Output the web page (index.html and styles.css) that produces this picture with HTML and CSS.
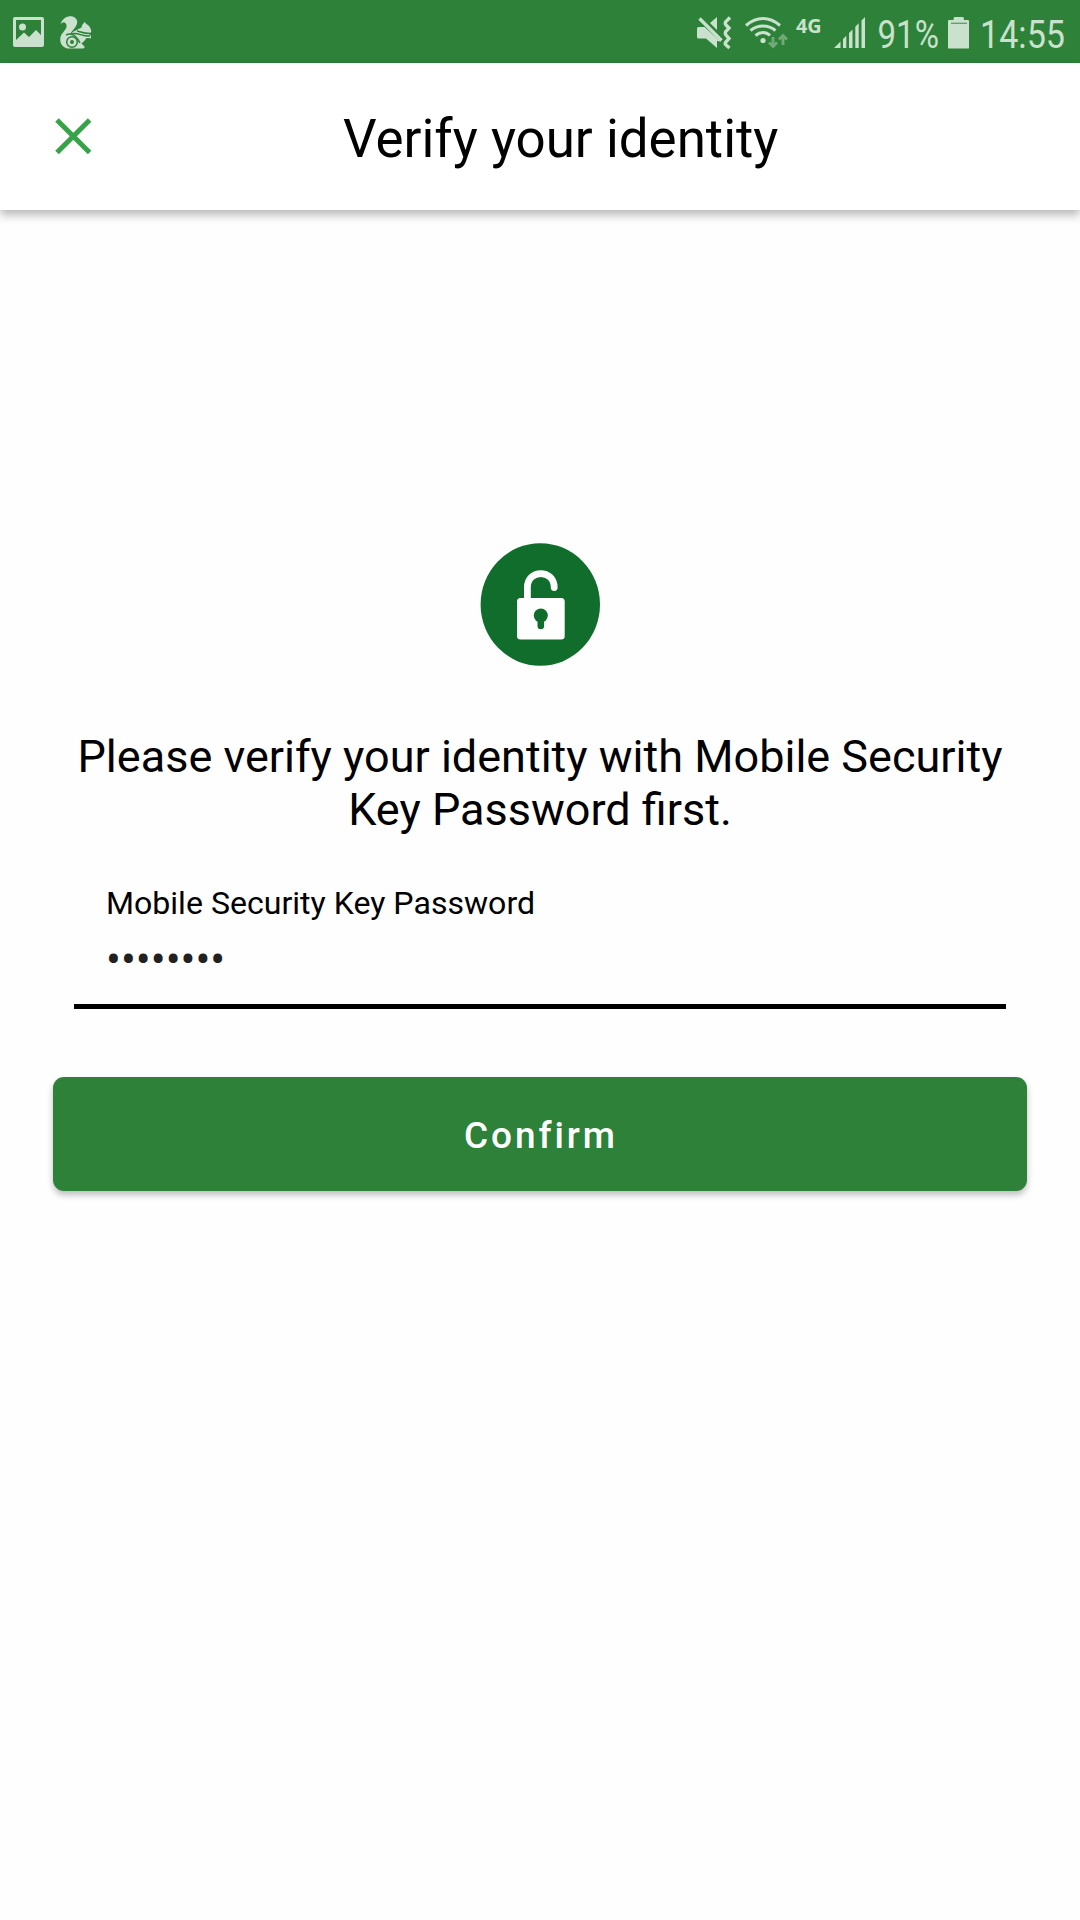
FILE: index.html
```html
<!DOCTYPE html>
<html lang="en">
<head>
<meta charset="utf-8">
<title>Verify your identity</title>
<link rel="stylesheet" href="styles.css">
</head>
<body>
<div class="screen">
  <div class="status">
    <svg class="status-left" width="100" height="63" viewBox="0 0 100 63">
      <path fill-rule="evenodd" d="M15 17H42Q44 17 44 19V45Q44 47 42 47H15Q13 47 13 45V19Q13 17 15 17ZM16 20V40L24 32.500L29 37L36 30L41 35V20Z"/>
      <circle cx="22.500" cy="27" r="3.500"/>
      <path d="M60.500 24.500C62 18.500 67 16 71.500 16.300C77 17.500 78.500 21.500 76 26C74 29.500 71 31.500 70.500 34C74 30.500 77.500 30 81.500 27.500C81.800 25.500 82.500 24 84 23V21.800L86.500 24C89.500 25.500 91 28.500 91.300 31.500C91 33 90 33.500 88.500 33.500L91 35.800V38.200L86.500 38C85 40 83.500 42 81.500 43.500L84.500 46.500Q85 48.500 83 48.500H67C61 46.500 59.500 41.500 60.500 37C61.500 32.500 67.500 29.500 66.500 25C65.500 21.500 62.500 21.500 60.500 24.500Z"/>
      <circle class="cut" cx="72" cy="42" r="5.300"/>
      <circle class="cut cut-fill" cx="72" cy="42" r="1.200"/>
      <path class="cut" d="M66 35C73 31 78 39 80 43M70 34.200C77 31 82 37 90 36M77 31C81 32 86 34 91.500 33.500"/>
    </svg>
    <svg width="112" height="63" viewBox="690 0 112 63" class="status-net">
      <path d="M697 28.500Q697 27 698.500 27H704.500L720.500 41.500L717 41V48L706 38.500H698.500Q697 38.500 697 37ZM710 23L717 17V30Z"/>
      <path class="stroke" d="M699.500 18.500L721.500 40.500"/>
      <path class="stroke" d="M730 17.500L725.500 22Q724.800 23.500 726 25L729 28L725.500 32Q724.800 33.500 726 35L729 38.500L725.500 42.500Q724.800 44 726 45L729.500 48"/>
      <path class="stroke arc" d="M746 25.500Q754 18.500 763 18.500T780 25.500M750.500 30.500Q756 26 763 26T775.500 30.500M755.500 35.500Q759 32.500 763 32.500T770 35.500"/>
      <circle cx="763" cy="40.500" r="2.600"/>
      <path class="stroke faint" d="M773 37V46M769 42.500L773 46.500L777 42.500M783 45V36M779 39.500L783 35.500L787 39.500"/>
    </svg>
    <span class="network">4G</span>
    <svg class="signal" width="31" height="63" viewBox="834 0 31 63">
      <path d="M834 48L840.500 41.500V48ZM843 48V39L846.300 35.700V48ZM849 48V33L852.500 29.500V48ZM855.300 48V26.700L858.700 23.300V48ZM861.500 48V20.500L865 17V48Z"/>
    </svg>
    <svg class="battery-text" width="66" height="63" viewBox="875 0 66 63">
      <text x="877.500" y="48" textLength="61.500" lengthAdjust="spacingAndGlyphs">91%</text>
    </svg>
    <svg class="battery" width="21" height="63" viewBox="948 0 21 63">
      <path d="M954.500 17H963Q964 17 964 20H968Q969 20 969 21V48Q969 48.500 968 48.500H949Q948 48.500 948 48V21Q948 20 949 20H953.500Q953.500 17 954.500 17Z"/>
      <path class="charge" d="M951 23.300H967"/>
    </svg>
    <svg class="clock" width="92" height="63" viewBox="978 0 92 63">
      <text x="980" y="48" textLength="85" lengthAdjust="spacingAndGlyphs">14:55</text>
    </svg>
  </div>
  <header class="header">
    <svg class="close" width="37" height="37" viewBox="0 0 37 37"><path d="M2 2L34.600 34.600M34.600 2L2 34.600"/></svg>
    <h1 class="title">Verify your identity</h1>
  </header>
  <main class="content">
    <svg class="lock" width="120" height="124" viewBox="0 0 120 124">
      <ellipse class="disc" cx="60.300" cy="61.500" rx="59.700" ry="61.300"/>
      <rect class="white" x="37" y="55" width="47.700" height="41.500" rx="3.500"/>
      <path class="shackle" d="M47.400 58V44.500C47.400 26 74.200 26 74.200 44.500"/>
      <circle class="disc" cx="60.800" cy="72.500" r="7"/>
      <path class="key" d="M60.800 75V83"/>
    </svg>
    <p class="message">Please verify your identity with Mobile Security<br>Key Password first.</p>
    <div class="field">
      <div class="label">Mobile Security Key Password</div>
      <div class="password">••••••••</div>
    </div>
    <button class="confirm">Confirm</button>
  </main>
</div>
</body>
</html>
```
FILE: styles.css
```css
* { box-sizing: border-box; }
body { margin: 0; background: #fefefe; font-family: Roboto, sans-serif; color: #000; }
.screen { width: 1080px; height: 1920px; overflow: hidden; display: flex; flex-direction: column; }
.status { height: 63px; background: #2d8138; display: flex; flex: none; color: #cae1cd; fill: #cae1cd; }
.status svg { display: block; flex: none; overflow: visible; }
.status-net { margin-left: 590px; }
.cut { fill: none; stroke: #2d8138; stroke-width: 1.5; }
.cut-fill { fill: #2d8138; }
.stroke { fill: none; stroke: #cae1cd; stroke-width: 3.4; }
.stroke.arc { stroke-width: 3; }
.stroke.faint { stroke: #71aa78; stroke-width: 2.8; }
.network { width: 32px; margin-left: -6px; font: bold 19.8px/27px "Noto Sans", sans-serif; padding-top: 12px; }
.signal { margin-left: 6px; }
.battery-text { margin-left: 10px; font-size: 39.5px; }
.battery { margin-left: 7px; }
.charge { fill: none; stroke: #5d9d65; stroke-width: 1.3; }
.clock { margin-left: 9px; font-size: 39.5px; }
.header { height: 147px; flex: none; display: flex; align-items: center; padding-left: 55px; background: #fff; box-shadow: 0 5px 9px rgba(0, 0, 0, .28); }
.close path { fill: none; stroke: #37a349; stroke-width: 5; }
.title { margin: 4px 0 0 251px; font-size: 52.9px; line-height: 62px; font-weight: 400; white-space: nowrap; }
.content { display: flex; flex-direction: column; padding: 333px 53px 0; }
.lock { align-self: center; flex: none; }
.disc { fill: #106d2b; }
.white { fill: #fff; }
.shackle { fill: none; stroke: #fff; stroke-width: 6.8; stroke-linecap: round; }
.key { stroke: #106d2b; stroke-width: 6.6; stroke-linecap: round; }
.message { margin: 63px 0 0; font-size: 45px; line-height: 53px; text-align: center; white-space: nowrap; }
.field { margin: 48px 21px 0; padding-left: 32px; height: 125px; border-bottom: 5px solid #000; }
.label { font-size: 32.1px; line-height: 39px; }
.password { font-size: 44.2px; line-height: 50px; margin-top: 12px; color: #212121; }
.confirm { margin-top: 68px; height: 114px; padding: 3px 0 0 2px; border: 0; border-radius: 11px; background: #2d8138; color: #fff; font: 500 37px/44px Roboto, sans-serif; letter-spacing: 2.9px; box-shadow: 0 4px 6px rgba(0, 0, 0, .25); }
```
